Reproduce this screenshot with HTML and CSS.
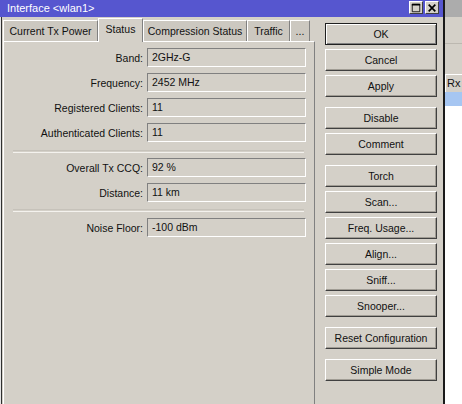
FILE: index.html
```html
<!DOCTYPE html>
<html>
<head>
<meta charset="utf-8">
<link rel="stylesheet" href="styles.css">
</head>
<body>
<div class="screen">
  <div class="window">
    <div class="titlebar">
      <span class="title">Interface &lt;wlan1&gt;</span>
      <div class="tb-buttons">
        <span class="tb-btn"><svg width="12" height="12" viewBox="0 0 12 12"><path d="M1.5 1.5h9v9h-9z" fill="none" stroke="#000" stroke-width="1"/><path d="M1 1h10v2H1z" fill="#000"/></svg></span>
        <span class="tb-btn"><svg width="12" height="12" viewBox="0 0 12 12"><path d="M2 2l8 8M10 2l-8 8" stroke="#000" stroke-width="2"/></svg></span>
      </div>
    </div>
    <div class="client">
      <div class="left">
        <div class="tabs">
          <div class="tab tab-power">Current Tx Power</div>
          <div class="tab tab-status active">Status</div>
          <div class="tab tab-comp">Compression Status</div>
          <div class="tab tab-traffic">Traffic</div>
          <div class="tab tab-more">...</div>
        </div>
        <div class="panel">
          <div class="group">
            <div class="row"><span class="label">Band:</span><span class="field">2GHz-G</span></div>
            <div class="row"><span class="label">Frequency:</span><span class="field">2452 MHz</span></div>
            <div class="row"><span class="label">Registered Clients:</span><span class="field">11</span></div>
            <div class="row"><span class="label">Authenticated Clients:</span><span class="field">11</span></div>
          </div>
          <div class="sep sep-1"></div>
          <div class="group">
            <div class="row"><span class="label">Overall Tx CCQ:</span><span class="field">92 %</span></div>
            <div class="row"><span class="label">Distance:</span><span class="field">11 km</span></div>
          </div>
          <div class="sep sep-2"></div>
          <div class="group">
            <div class="row"><span class="label">Noise Floor:</span><span class="field">-100 dBm</span></div>
          </div>
        </div>
      </div>
      <div class="buttons">
        <div class="btn default">OK</div>
        <div class="btn">Cancel</div>
        <div class="btn">Apply</div>
        <div class="btn gap">Disable</div>
        <div class="btn">Comment</div>
        <div class="btn gap">Torch</div>
        <div class="btn">Scan...</div>
        <div class="btn">Freq. Usage...</div>
        <div class="btn">Align...</div>
        <div class="btn">Sniff...</div>
        <div class="btn">Snooper...</div>
        <div class="btn gap">Reset Configuration</div>
        <div class="btn gap">Simple Mode</div>
      </div>
    </div>
  </div>
  <div class="behind">
    <div class="b-top"></div>
    <div class="b-toolbar"></div>
    <div class="b-area"></div>
    <div class="b-header">Rx</div>
    <div class="b-selected"></div>
    <div class="b-rows"></div>
  </div>
</div>
</body>
</html>
```
FILE: styles.css
```css
html, body {
  margin: 0;
  padding: 0;
}
body {
  font-family: "Liberation Sans", Arial, sans-serif;
  font-size: 10.5px;
  color: #111;
  background: #fff;
}
.screen {
  width: 462px;
  height: 404px;
  overflow: hidden;
  display: flex;
}
.window {
  width: 443px;
  height: 404px;
  border-right: 2px solid #1a1a1a;
  background: #d4d0c8;
  display: flex;
  flex-direction: column;
}
.titlebar {
  height: 17px;
  background: #5656cf;
  display: flex;
  align-items: center;
  justify-content: space-between;
  padding: 0 4px 0 7px;
  box-sizing: border-box;
}
.title {
  color: #fff;
  font-size: 11px;
  line-height: 15px;
  margin-top: -1px;
}
.tb-buttons {
  display: flex;
  gap: 2px;
  align-self: flex-start;
  margin-top: 1px;
}
.tb-btn {
  width: 14px;
  height: 13px;
  box-sizing: border-box;
  background: #d4d0c8;
  border-top: 1px solid #fff;
  border-left: 1px solid #fff;
  border-right: 1px solid #404040;
  border-bottom: 1px solid #404040;
  display: flex;
  align-items: center;
  justify-content: center;
}
.tb-btn svg {
  width: 10px;
  height: 10px;
}
.client {
  flex: 1;
  display: flex;
  padding-left: 3px;
  box-shadow: inset 1px 0 #e4e4e4, inset 2px 0 #303030;
  min-height: 0;
}
.left {
  width: 312px;
  display: flex;
  flex-direction: column;
}
.tabs {
  height: 24px;
  display: flex;
  align-items: flex-end;
  position: relative;
  z-index: 1;
}
.tab {
  height: 21px;
  box-sizing: border-box;
  background: #ccc8c0;
  border-top: 1px solid #fff;
  border-left: 1px solid #fff;
  border-right: 1px solid #808080;
  display: flex;
  align-items: center;
  justify-content: center;
  padding-bottom: 1px;
  white-space: nowrap;
}
.tab.active {
  height: 24px;
  margin-bottom: -1px;
  background: #d4d0c8;
  padding-bottom: 4px;
}
.tab-power { width: 95px; }
.tab-status { width: 45px; }
.tab-comp { width: 104px; }
.tab-traffic { width: 43px; }
.tab-more { width: 20px; }
.panel {
  flex: 1;
  border-top: 1px solid #fff;
  border-left: 1px solid #fff;
  border-right: 1px solid #808080;
  padding-top: 6px;
  display: flex;
  flex-direction: column;
}
.group {
  display: flex;
  flex-direction: column;
  gap: 6px;
}
.row {
  display: flex;
  align-items: center;
  height: 19px;
}
.label {
  width: 139px;
  text-align: right;
  padding-right: 4px;
  white-space: nowrap;
}
.field {
  width: 159px;
  height: 19px;
  box-sizing: border-box;
  border-top: 1px solid #808080;
  border-left: 1px solid #808080;
  border-right: 1px solid #fff;
  border-bottom: 1px solid #fff;
  padding-left: 4px;
  line-height: 17px;
  white-space: nowrap;
}
.sep {
  height: 1px;
  border-top: 1px solid #c6c2ba;
  border-bottom: 1px solid #f4f2ee;
  margin-left: 9px;
  margin-right: 10px;
}
.sep-1 { margin-top: 8px; margin-bottom: 5px; }
.sep-2 { margin-top: 7px; margin-bottom: 6px; }
.buttons {
  width: 112px;
  margin-left: 10px;
  padding-top: 6px;
  display: flex;
  flex-direction: column;
  gap: 4px;
}
.btn {
  height: 22px;
  box-sizing: border-box;
  border-top: 1px solid #fff;
  border-left: 1px solid #fff;
  border-right: 1px solid #404040;
  border-bottom: 1px solid #404040;
  box-shadow: inset -1px -1px #a09c94;
  display: flex;
  align-items: center;
  justify-content: center;
  white-space: nowrap;
  padding-bottom: 1px;
}
.btn.default {
  border: 1px solid #202020;
  box-shadow: inset 1px 1px #fff, inset -1px -1px #808080;
}
.btn.gap {
  margin-top: 6px;
}
.behind {
  flex: 1;
  display: flex;
  flex-direction: column;
  background: #fff;
}
.b-top {
  height: 17px;
  background: #acacac;
}
.b-toolbar {
  height: 26px;
  background: #d4d0c8;
  border-bottom: 1px solid #bcb8b0;
}
.b-area {
  height: 30px;
  background: #d4d0c8;
}
.b-header {
  height: 18px;
  box-sizing: border-box;
  background: #d4d0c8;
  border-top: 1px solid #fff;
  border-left: 1px solid #fff;
  padding-left: 1px;
  line-height: 17px;
  font-size: 11px;
}
.b-selected {
  height: 14px;
  background: #a6c6f2;
}
.b-rows {
  flex: 1;
  background: #fff;
}
```
